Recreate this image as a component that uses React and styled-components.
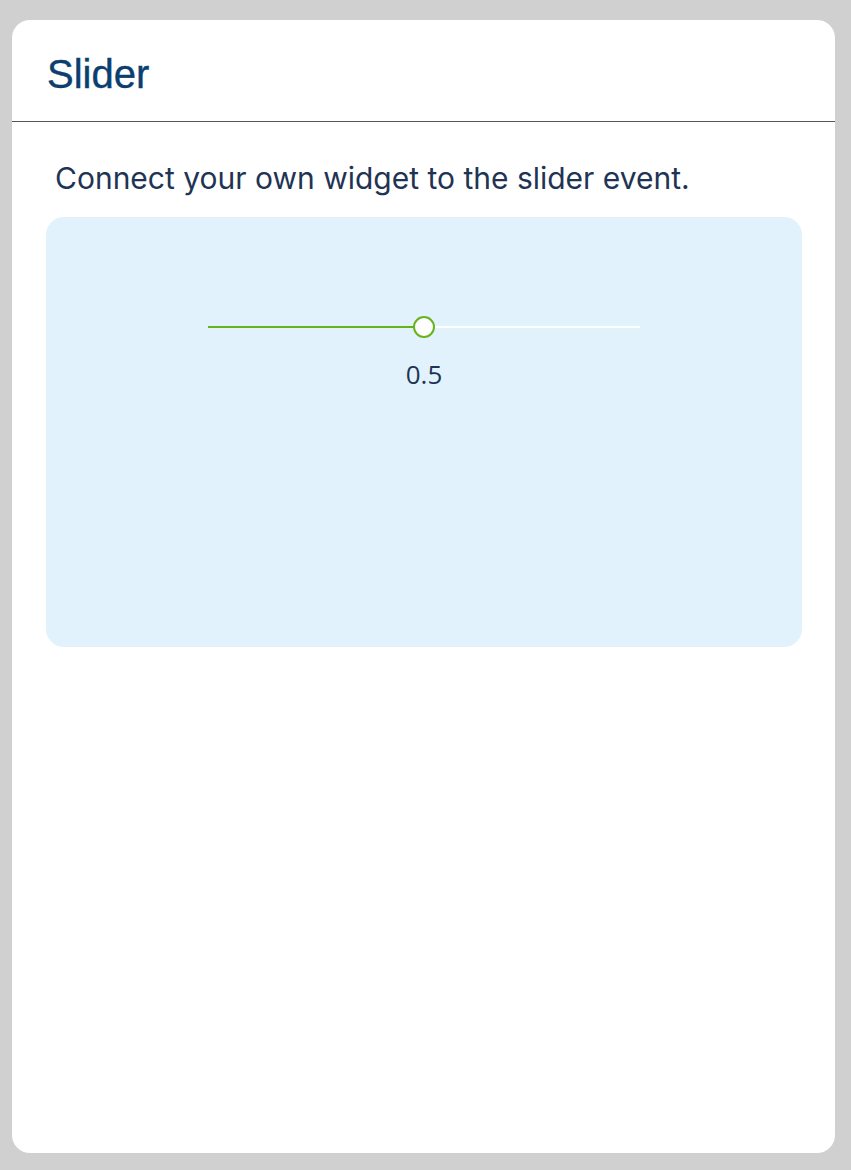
import React, { useState } from 'react';
import styled, { createGlobalStyle } from 'styled-components';

const GlobalStyle = createGlobalStyle`
  html, body {
    margin: 0;
    padding: 0;
    background: #d0d0d0;
  }
  body {
    font-family: Inter, "Open Sans", sans-serif;
  }
`;

const Page = styled.div`
  box-sizing: border-box;
  width: 851px;
  height: 1170px;
  padding: 20px 16px 17px 12px;
`;

const Card = styled.div`
  height: 100%;
  background: #fff;
  border-radius: 18px;
  display: flex;
  flex-direction: column;
  overflow: hidden;
`;

const Header = styled.div`
  height: 102px;
  box-sizing: border-box;
  padding: 34px 35px 0;
  border-bottom: 1px solid #555;
`;

const Title = styled.h2`
  margin: 0;
  font-family: "Liberation Sans", Arial, sans-serif;
  font-size: 40px;
  font-weight: 400;
  line-height: 40px;
  color: #0b3f70;
  -webkit-text-stroke: 0.4px #0b3f70;
`;

const Body = styled.div`
  padding: 38px 33px 0 34px;
`;

const Description = styled.p`
  margin: 0 0 21px 9px;
  font-family: Inter, sans-serif;
  font-size: 30px;
  font-weight: 400;
  line-height: 36px;
  color: #1f3454;
`;

const Panel = styled.div`
  height: 430px;
  background: #e1f2fd;
  border-radius: 18px;
  display: flex;
  flex-direction: column;
  align-items: center;
  padding-top: 99px;
  box-sizing: border-box;
`;

const SliderWrap = styled.div`
  display: flex;
  flex-direction: column;
  align-items: center;
  gap: 23px;
`;

const Track = styled.div`
  position: relative;
  width: 432px;
  height: 22px;
  display: flex;
  align-items: center;
`;

const Rail = styled.div`
  width: 100%;
  height: 2px;
  background: #fff;
  position: relative;
`;

const Fill = styled.div`
  position: absolute;
  left: 0;
  top: 0;
  height: 2px;
  background: #67b31c;
`;

const Thumb = styled.div`
  position: absolute;
  top: 0;
  width: 22px;
  height: 22px;
  box-sizing: border-box;
  margin-left: -11px;
  border-radius: 50%;
  background: #fff;
  border: 2px solid #6ab31e;
`;

const Value = styled.div`
  font-family: "Open Sans", sans-serif;
  font-size: 26px;
  line-height: 26px;
  color: #1f3454;
`;

export default function App() {
  const [value] = useState(0.5);
  const pct = `${value * 100}%`;

  return (
    <>
      <GlobalStyle />
      <Page>
        <Card>
          <Header>
            <Title>Slider</Title>
          </Header>
          <Body>
            <Description>Connect your own widget to the slider event.</Description>
            <Panel>
              <SliderWrap>
                <Track>
                  <Rail>
                    <Fill style={{ width: pct }} />
                  </Rail>
                  <Thumb style={{ left: pct }} />
                </Track>
                <Value>{value}</Value>
              </SliderWrap>
            </Panel>
          </Body>
        </Card>
      </Page>
    </>
  );
}
